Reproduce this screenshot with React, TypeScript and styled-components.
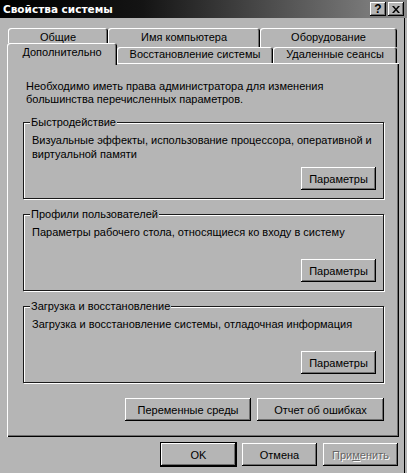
import React from "react";
import styled, { createGlobalStyle } from "styled-components";

const BG = "#b5b5b5";
const DARK = "#6e6e6e";

const GlobalStyle = createGlobalStyle`
  html, body {
    margin: 0;
    padding: 0;
    background: ${BG};
  }
  body {
    font-family: "Liberation Sans", Arial, sans-serif;
    font-size: 11px;
    color: #000;
  }
`;

const Window = styled.div`
  width: 407px;
  height: 473px;
  background: ${BG};
  display: flex;
  flex-direction: column;
  overflow: hidden;
`;

const TitleBar = styled.div`
  height: 18px;
  display: flex;
  align-items: center;
  gap: 2px;
  padding: 0 3px 0 3px;
  background: linear-gradient(to right, #000 0%, #141414 35%, #8a8a8a 100%);
`;

const Title = styled.span`
  flex: 1;
  color: #fff;
  font-family: "DejaVu Sans", Verdana, sans-serif;
  font-weight: bold;
  font-size: 10.5px;
`;

const CaptionButton = styled.div`
  width: 16px;
  height: 14px;
  box-sizing: border-box;
  display: flex;
  align-items: center;
  justify-content: center;
  background: ${BG};
  font-family: "Liberation Sans", Arial, sans-serif;
  font-weight: bold;
  font-size: 12px;
  box-shadow: inset -1px -1px 0 #000, inset 1px 1px 0 #fff, inset -2px -2px 0 ${DARK};
`;

const Body = styled.div`
  flex: 1;
  display: flex;
  flex-direction: column;
  padding-top: 10px;
  margin-right: 2px;
  border-right: 1px solid #000;
`;

const TabRow = styled.div<{ $indent: number; $overlap?: boolean }>`
  display: flex;
  align-items: flex-start;
  padding-left: ${(p) => p.$indent}px;
  height: ${(p) => (p.$overlap ? 20 : 19)}px;
  margin-top: ${(p) => (p.$overlap ? -4 : 0)}px;
`;

const Tab = styled.div<{ $w: number; $active?: boolean; $front?: boolean }>`
  position: relative;
  width: ${(p) => p.$w}px;
  height: ${(p) => (p.$active ? 22 : p.$front ? 16 : 19)}px;
  margin-top: ${(p) => (p.$front && !p.$active ? 4 : 0)}px;
  padding-top: ${(p) => (p.$front && !p.$active ? 1 : 3)}px;
  box-sizing: border-box;
  text-align: center;
  line-height: 13px;
  white-space: nowrap;
  background: ${BG};
  border-radius: 3px 3px 0 0;
  box-shadow: inset 1px 1px 0 #fff, inset -1px 0 0 #000, inset -2px 0 0 ${DARK};
  z-index: ${(p) => (p.$active ? 2 : 1)};
`;

const Panel = styled.div`
  margin-left: 7px;
  width: 392px;
  height: 374px;
  box-sizing: border-box;
  padding: 17px 15px 0 16px;
  display: flex;
  flex-direction: column;
  box-shadow: inset 1px 1px 0 #fff, inset -1px -1px 0 #000, inset -2px -2px 0 ${DARK};
`;

const Note = styled.p`
  margin: 0 0 10px 3px;
  line-height: 13px;
`;

const Group = styled.fieldset`
  margin: 0 0 9px 0;
  padding: 4px 7px 8px 8px;
  border: 1px solid #1a1a1a;
  box-shadow: inset 1px 1px 0 #fff, 1px 1px 0 #fff;
  display: flex;
  flex-direction: column;
`;

const Legend = styled.legend`
  padding: 0 1px;
  margin-left: -2px;
  line-height: 13px;
  background: ${BG};
`;

const GroupText = styled.div`
  height: 28px;
  line-height: 14px;
  margin-bottom: 6px;
`;

const ButtonRow = styled.div<{ $gap?: number }>`
  display: flex;
  justify-content: flex-end;
  gap: ${(p) => p.$gap ?? 6}px;
`;

const Button = styled.div<{ $w?: number; $default?: boolean; $disabled?: boolean }>`
  width: ${(p) => p.$w ?? 75}px;
  height: 23px;
  box-sizing: border-box;
  display: flex;
  align-items: center;
  justify-content: center;
  background: ${BG};
  color: ${(p) => (p.$disabled ? "#666" : "#000")};
  text-shadow: ${(p) => (p.$disabled ? "1px 1px 0 #fff" : "none")};
  box-shadow: ${(p) =>
    p.$default
      ? `0 0 0 1px #000, inset -1px -1px 0 #000, inset 1px 1px 0 #fff, inset -2px -2px 0 ${DARK}`
      : `inset -1px -1px 0 #000, inset 1px 1px 0 #fff, inset -2px -2px 0 ${DARK}`};
`;

const Footer = styled(ButtonRow)`
  margin-top: 6px;
  padding-right: 6px;
`;

const LowerRow = styled(ButtonRow)`
  margin-top: 6px;
`;

const CloseGlyph = () => (
  <svg width={8} height={7} viewBox="0 0 8 7">
    <path d="M0 0H2L4 2.5L6 0H8L5 3.5L8 7H6L4 4.5L2 7H0L3 3.5Z" fill="#000" />
  </svg>
);

const groups = [
  {
    title: "Быстродействие",
    text: ["Визуальные эффекты, использование процессора, оперативной и", "виртуальной памяти"],
  },
  {
    title: "Профили пользователей",
    text: ["Параметры рабочего стола, относящиеся ко входу в систему"],
  },
  {
    title: "Загрузка и восстановление",
    text: ["Загрузка и восстановление системы, отладочная информация"],
  },
];

export default function App() {
  return (
    <>
      <GlobalStyle />
      <Window>
        <TitleBar>
          <Title>Свойства системы</Title>
          <CaptionButton>?</CaptionButton>
          <CaptionButton>
            <CloseGlyph />
          </CaptionButton>
        </TitleBar>
        <Body>
          <TabRow $indent={8}>
            <Tab $w={100}>Общие</Tab>
            <Tab $w={152}>Имя компьютера</Tab>
            <Tab $w={137}>Оборудование</Tab>
          </TabRow>
          <TabRow $indent={7} $overlap>
            <Tab $w={110} $front $active>
              Дополнительно
            </Tab>
            <Tab $w={156} $front>
              Восстановление системы
            </Tab>
            <Tab $w={124} $front>
              Удаленные сеансы
            </Tab>
          </TabRow>
          <Panel>
            <Note>
              Необходимо иметь права администратора для изменения
              <br />
              большинства перечисленных параметров.
            </Note>
            {groups.map((g) => (
              <Group key={g.title}>
                <Legend>{g.title}</Legend>
                <GroupText>
                  {g.text.map((line) => (
                    <div key={line}>{line}</div>
                  ))}
                </GroupText>
                <ButtonRow>
                  <Button>Параметры</Button>
                </ButtonRow>
              </Group>
            ))}
            <LowerRow>
              <Button $w={126}>Переменные среды</Button>
              <Button $w={127}>Отчет об ошибках</Button>
            </LowerRow>
          </Panel>
          <Footer>
            <Button $default>OK</Button>
            <Button>Отмена</Button>
            <Button $disabled>
              При<u>м</u>енить
            </Button>
          </Footer>
        </Body>
      </Window>
    </>
  );
}
